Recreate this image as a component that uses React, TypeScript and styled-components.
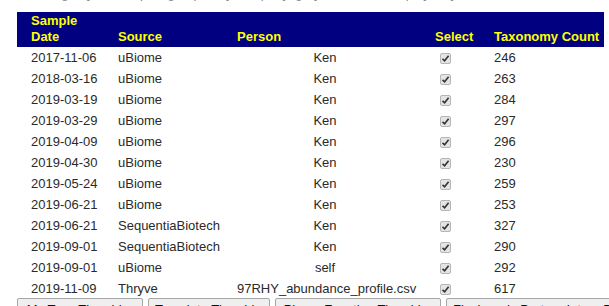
import React from "react";
import styled, { createGlobalStyle } from "styled-components";

const Global = createGlobalStyle`
  html, body { margin: 0; padding: 0; background: #fff; overflow: hidden; }
  body { font-family: Arial, "Liberation Sans", sans-serif; }
`;

const Page = styled.div`
  padding-left: 17px;
  margin-top: -14px;
  width: 592px;
`;

const Intro = styled.p`
  margin: 0 0 11px 14px;
  font-size: 13px;
  line-height: 15px;
  color: #888;
  white-space: nowrap;
`;

const Table = styled.table`
  border-collapse: collapse;
  width: 587px;
  table-layout: fixed;
  font-size: 13px;
`;

const HeadRow = styled.tr`
  background: #000080;
  height: 35px;
`;

const Th = styled.th<{ $w: number }>`
  width: ${(p) => p.$w}px;
  padding: 0 0 2px 14px;
  text-align: left;
  vertical-align: bottom;
  color: #ffff00;
  font-weight: bold;
  font-size: 13px;
  line-height: 16px;
  white-space: nowrap;
`;

const Row = styled.tr`
  height: 21px;
`;

const Td = styled.td<{ $center?: boolean }>`
  padding: 0 ${(p) => (p.$center ? "8px" : "0")} 0 14px;
  text-align: ${(p) => (p.$center ? "center" : "left")};
  color: #2a2a2a;
  line-height: 15px;
  white-space: nowrap;
  vertical-align: middle;
`;

const CheckBox = styled.span`
  display: inline-flex;
  align-items: center;
  justify-content: center;
  box-sizing: border-box;
  width: 11px;
  height: 11px;
  margin: 0 0 0 5px;
  vertical-align: middle;
  background: #e4e4e4;
  border: 1px solid #b5b5b5;
  border-radius: 2px;
`;

const Buttons = styled.div`
  display: flex;
  gap: 5px;
  margin-top: -1px;
`;

const Button = styled.button<{ $w: number }>`
  width: ${(p) => p.$w}px;
  flex: none;
  padding: 3px 6px 1px;
  font-family: Arial, "Liberation Sans", sans-serif;
  font-size: 13px;
  line-height: 15px;
  color: #111;
  background: #efefef;
  border: 1px solid #a6a6a6;
  border-radius: 2px;
  white-space: nowrap;
  overflow: hidden;
  text-align: center;
`;

const rows: [string, string, string, number][] = [
  ["2017-11-06", "uBiome", "Ken", 246],
  ["2018-03-16", "uBiome", "Ken", 263],
  ["2019-03-19", "uBiome", "Ken", 284],
  ["2019-03-29", "uBiome", "Ken", 297],
  ["2019-04-09", "uBiome", "Ken", 296],
  ["2019-04-30", "uBiome", "Ken", 230],
  ["2019-05-24", "uBiome", "Ken", 259],
  ["2019-06-21", "uBiome", "Ken", 253],
  ["2019-06-21", "SequentiaBiotech", "Ken", 327],
  ["2019-09-01", "SequentiaBiotech", "Ken", 290],
  ["2019-09-01", "uBiome", "self", 292],
  ["2019-11-09", "Thryve", "97RHY_abundance_profile.csv", 617],
];

function Checked() {
  return (
    <CheckBox role="checkbox" aria-checked="true">
      <svg width="9" height="9" viewBox="0 0 9 9">
        <path d="M1.5 4.8 L3.6 6.8 L7.6 1.8" fill="none" stroke="#333" strokeWidth="1.6" />
      </svg>
    </CheckBox>
  );
}

export default function App() {
  return (
    <>
      <Global />
      <Page>
        <Intro>Listing of your samples grouped by company, gray entries are display only</Intro>
        <Table>
          <thead>
            <HeadRow>
              <Th $w={73}>
                Sample
                <br />
                Date
              </Th>
              <Th $w={105}>Source</Th>
              <Th $w={184}>Person</Th>
              <Th $w={45}>Select</Th>
              <Th $w={110}>Taxonomy Count</Th>
            </HeadRow>
          </thead>
          <tbody>
            {rows.map(([d, s, p, c], i) => (
              <Row key={i}>
                <Td>{d}</Td>
                <Td>{s}</Td>
                <Td $center>{p}</Td>
                <Td>
                  <Checked />
                </Td>
                <Td>{c}</Td>
              </Row>
            ))}
          </tbody>
        </Table>
        <Buttons>
          <Button $w={126}>My Taxa Thumbler</Button>
          <Button $w={122}>Template Thumbler</Button>
          <Button $w={166}>Phase Function Thumbler</Button>
          <Button $w={170}>Flashcards Partner Interp Data</Button>
        </Buttons>
      </Page>
    </>
  );
}
